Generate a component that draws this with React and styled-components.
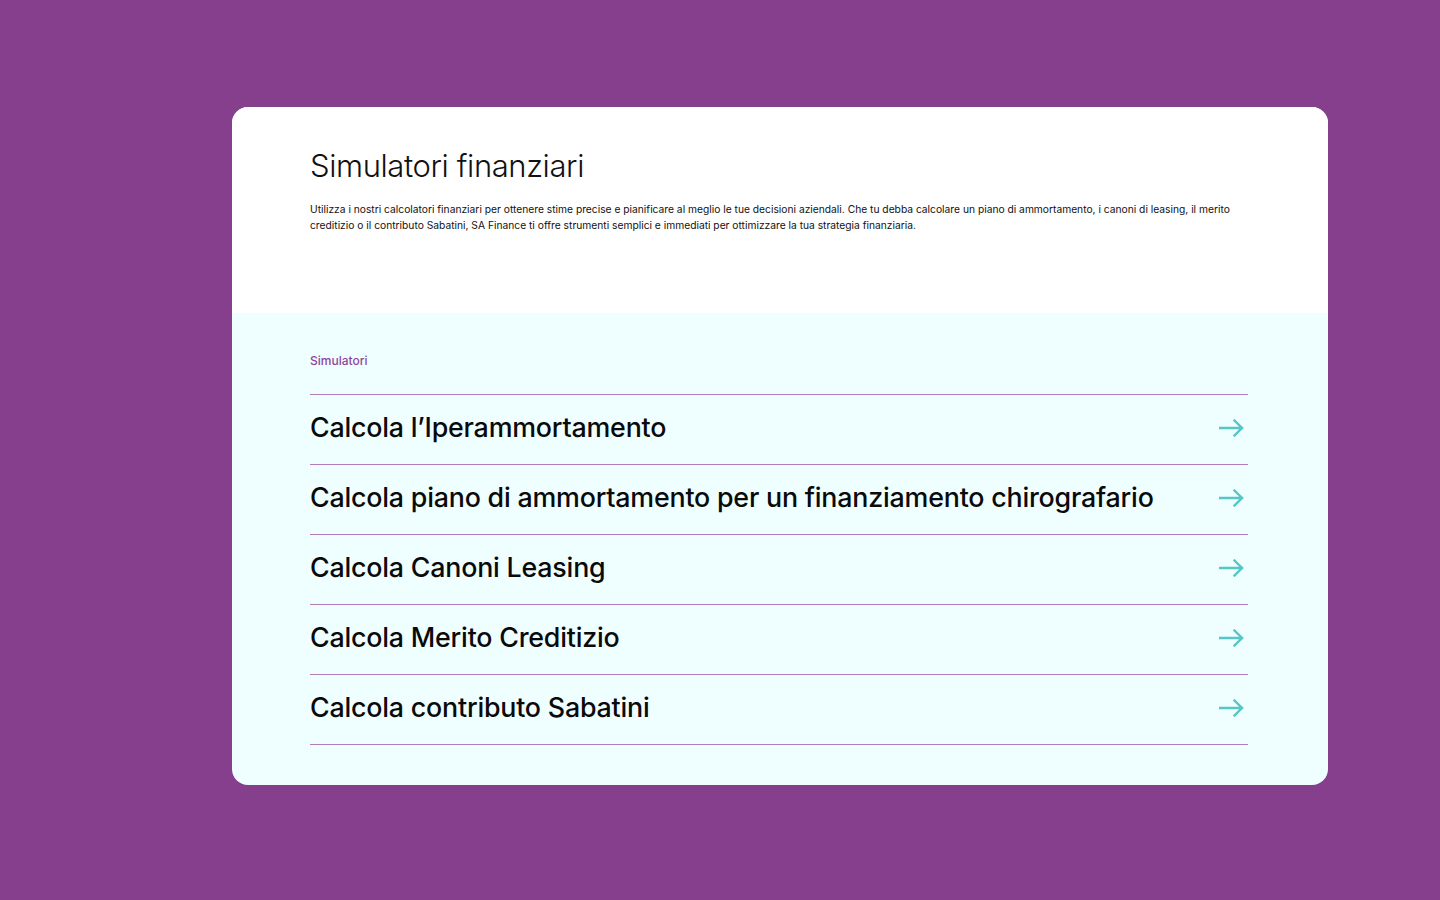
import React from "react";
import styled, { createGlobalStyle } from "styled-components";

const Global = createGlobalStyle`
  html, body { margin: 0; padding: 0; }
  body {
    background: #863f8c;
    font-family: Inter, "Noto Sans", sans-serif;
    -webkit-font-smoothing: antialiased;
  }
`;

const Page = styled.div`
  min-height: 900px;
  box-sizing: border-box;
  padding: 107px 112px 0 232px;
`;

const Card = styled.div`
  width: 1096px;
  border-radius: 16px;
  overflow: hidden;
  background: #effefe;
`;

const Intro = styled.section`
  background: #ffffff;
  height: 206px;
  box-sizing: border-box;
  padding: 39px 80px 0 78px;
`;

const Title = styled.h1`
  margin: 0;
  font-family: Inter, sans-serif;
  font-weight: 300;
  font-size: 31px;
  line-height: 40px;
  color: #111;
  letter-spacing: -0.4px;
`;

const Lead = styled.p`
  margin: 15px 0 0;
  font-size: 10.25px;
  line-height: 16px;
  color: #111;
  font-weight: 400;
`;

const List = styled.section`
  padding: 40px 80px 40px 78px;
`;

const Label = styled.div`
  font-size: 12px;
  line-height: 16px;
  font-weight: 500;
  color: #8e46a0;
  margin-bottom: 25px;
`;

const Items = styled.ul`
  list-style: none;
  margin: 0;
  padding: 0;
  border-top: 1px solid #b37cbf;
`;

const Item = styled.li`
  height: 70px;
  box-sizing: border-box;
  border-bottom: 1px solid #b37cbf;
  display: flex;
  align-items: center;
  justify-content: space-between;
  padding: 0 4px 5px 0;
`;

const ItemText = styled.span`
  font-size: 26.8px;
  font-weight: 500;
  color: #0a0a0a;
  letter-spacing: -0.2px;
`;

const ArrowIcon = styled.svg`
  margin-top: 2px;
  flex: none;
`;

const Arrow = () => (
  <ArrowIcon width="25" height="18" viewBox="0 0 25 18" fill="none">
    <path d="M1 9H23M15.5 1.5L23 9L15.5 16.5" stroke="#56c6c6" strokeWidth="2.4" strokeLinecap="square" />
  </ArrowIcon>
);

const items = [
  "Calcola l’Iperammortamento",
  "Calcola piano di ammortamento per un finanziamento chirografario",
  "Calcola Canoni Leasing",
  "Calcola Merito Creditizio",
  "Calcola contributo Sabatini",
];

export default function App() {
  return (
    <>
      <Global />
      <Page>
        <Card>
          <Intro>
            <Title>Simulatori finanziari</Title>
            <Lead>
              Utilizza i nostri calcolatori finanziari per ottenere stime precise e pianificare al meglio le tue decisioni aziendali. Che tu debba calcolare un piano di ammortamento, i canoni di leasing, il merito creditizio o il contributo Sabatini, SA Finance ti offre strumenti semplici e immediati per ottimizzare la tua strategia finanziaria.
            </Lead>
          </Intro>
          <List>
            <Label>Simulatori</Label>
            <Items>
              {items.map((t) => (
                <Item key={t}>
                  <ItemText>{t}</ItemText>
                  <Arrow />
                </Item>
              ))}
            </Items>
          </List>
        </Card>
      </Page>
    </>
  );
}
